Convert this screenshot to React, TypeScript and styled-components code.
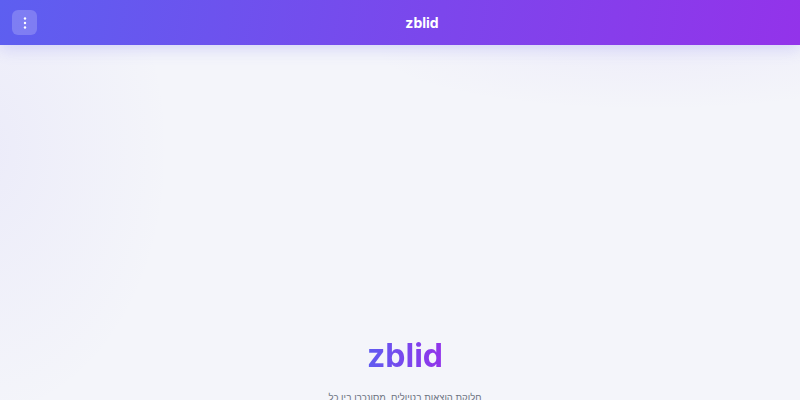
import React from "react";
import styled, { createGlobalStyle } from "styled-components";

const Global = createGlobalStyle`
  html, body { margin: 0; padding: 0; }
  body {
    font-family: Inter, "Noto Sans", "DejaVu Sans", sans-serif;
    background: #f4f5fa;
    overflow: hidden;
  }
`;

const Page = styled.div`
  width: 800px;
  height: 400px;
  position: relative;
  overflow: hidden;
  background:
    radial-gradient(ellipse 190px 270px at -20px 150px, rgba(124, 108, 240, 0.07), rgba(124, 108, 240, 0) 100%),
    radial-gradient(ellipse 280px 60px at 650px 50px, rgba(140, 110, 240, 0.05), rgba(140, 110, 240, 0) 100%),
    #f4f5fa;
  display: flex;
  flex-direction: column;
`;

const Header = styled.header`
  height: 45px;
  flex: 0 0 45px;
  background: linear-gradient(100deg, #5d5ff0 0%, #7c46ec 55%, #9333ea 100%);
  box-shadow: 0 4px 16px rgba(99, 102, 241, 0.22);
  display: flex;
  align-items: center;
  padding: 0 12px;
  position: relative;
  z-index: 1;
`;

const MenuButton = styled.button`
  width: 25px;
  height: 25px;
  border: none;
  border-radius: 6px;
  background: rgba(255, 255, 255, 0.2);
  display: flex;
  align-items: center;
  justify-content: center;
  padding: 0;
  cursor: pointer;
`;

const HeaderTitle = styled.h1`
  flex: 1;
  margin: 0 0 0 19px;
  text-align: center;
  color: #fff;
  font-size: 14px;
  font-weight: 700;
`;

const Main = styled.main`
  flex: 1;
  display: flex;
  flex-direction: column;
  align-items: center;
  padding: 289px 0 0 10px;
`;

const HeroTitle = styled.h2`
  margin: 0;
  font-size: 32px;
  font-weight: 700;
  line-height: 44px;
  background: linear-gradient(90deg, #5f5cf0, #9333ea);
  -webkit-background-clip: text;
  background-clip: text;
  color: transparent;
`;

const Subtitle = styled.p`
  margin: 13px 0 0;
  direction: rtl;
  text-align: center;
  font-family: "Liberation Sans", "DejaVu Sans", sans-serif;
  font-size: 9.5px;
  color: #6b7280;
  line-height: 14px;
`;

export default function App() {
  return (
    <>
      <Global />
      <Page>
        <Header>
          <MenuButton aria-label="menu">
            <svg width="4" height="12" viewBox="0 0 4 12">
              <circle cx="2" cy="1.5" r="1.2" fill="#fff" />
              <circle cx="2" cy="6" r="1.2" fill="#fff" />
              <circle cx="2" cy="10.5" r="1.2" fill="#fff" />
            </svg>
          </MenuButton>
          <HeaderTitle>zblid</HeaderTitle>
        </Header>
        <Main>
          <HeroTitle>zblid</HeroTitle>
          <Subtitle>
            חלוקת הוצאות בטיולים, מסונכרן בין כל
            <br />
            המשתתפים בזמן אמת
          </Subtitle>
        </Main>
      </Page>
    </>
  );
}
